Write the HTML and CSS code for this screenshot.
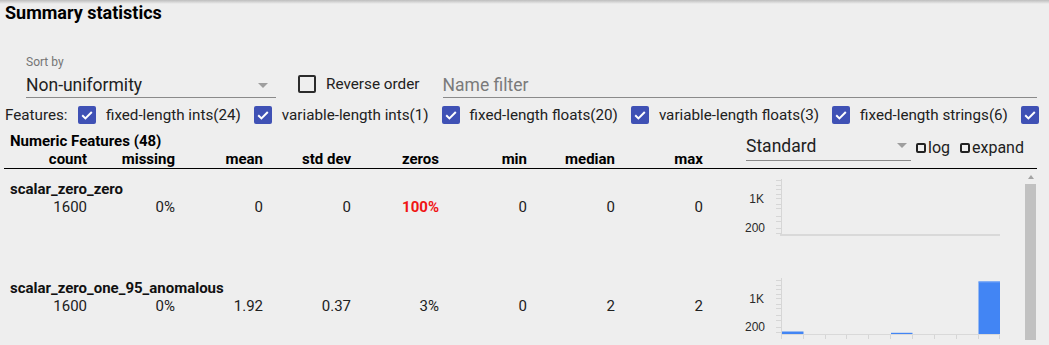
FILE: index.html
```html
<!DOCTYPE html>
<html lang="en">
<head>
    <meta charset="UTF-8">
    <meta name="viewport" content="width=device-width, initial-scale=1.0">
    <title>Summary statistics</title>
    <link rel="stylesheet" href="styles.css">
</head>
<body>
    <h2 class="title">Summary statistics</h2>

    <div class="controls">
        <div class="sort-by">
            <div class="field-label">Sort by</div>
            <div class="select">
                <span>Non-uniformity</span>
                <span class="caret"></span>
            </div>
        </div>
        <label class="reverse">
            <span class="box"></span>
            <span>Reverse order</span>
        </label>
        <div class="name-filter">Name filter</div>
    </div>

    <div class="features">
        <span class="features-label">Features:</span>
        <span class="feature-check">
            <svg class="check" width="18" height="18" viewBox="0 0 18 18"><rect width="18" height="18" rx="2" fill="#3f51b5"/><path d="M4.2 9.3 L7.4 12.4 L13.8 6" fill="none" stroke="#fff" stroke-width="2"/></svg>
            fixed-length ints(24)
        </span>
        <span class="feature-check">
            <svg class="check" width="18" height="18" viewBox="0 0 18 18"><rect width="18" height="18" rx="2" fill="#3f51b5"/><path d="M4.2 9.3 L7.4 12.4 L13.8 6" fill="none" stroke="#fff" stroke-width="2"/></svg>
            variable-length ints(1)
        </span>
        <span class="feature-check">
            <svg class="check" width="18" height="18" viewBox="0 0 18 18"><rect width="18" height="18" rx="2" fill="#3f51b5"/><path d="M4.2 9.3 L7.4 12.4 L13.8 6" fill="none" stroke="#fff" stroke-width="2"/></svg>
            fixed-length floats(20)
        </span>
        <span class="feature-check">
            <svg class="check" width="18" height="18" viewBox="0 0 18 18"><rect width="18" height="18" rx="2" fill="#3f51b5"/><path d="M4.2 9.3 L7.4 12.4 L13.8 6" fill="none" stroke="#fff" stroke-width="2"/></svg>
            variable-length floats(3)
        </span>
        <span class="feature-check">
            <svg class="check" width="18" height="18" viewBox="0 0 18 18"><rect width="18" height="18" rx="2" fill="#3f51b5"/><path d="M4.2 9.3 L7.4 12.4 L13.8 6" fill="none" stroke="#fff" stroke-width="2"/></svg>
            fixed-length strings(6)
        </span>
        <span class="feature-check">
            <svg class="check" width="18" height="18" viewBox="0 0 18 18"><rect width="18" height="18" rx="2" fill="#3f51b5"/><path d="M4.2 9.3 L7.4 12.4 L13.8 6" fill="none" stroke="#fff" stroke-width="2"/></svg>
        </span>
    </div>

    <div class="table-head">
        <div class="head-left">
            <div class="group-title">Numeric Features (48)</div>
            <div class="stat-grid head">
                <span>count</span>
                <span>missing</span>
                <span>mean</span>
                <span>std dev</span>
                <span>zeros</span>
                <span>min</span>
                <span>median</span>
                <span>max</span>
            </div>
        </div>
        <div class="head-right">
            <div class="select small">
                <span>Standard</span>
                <span class="caret"></span>
            </div>
            <span class="mini-check"><span class="mini-box"></span>log</span>
            <span class="mini-check"><span class="mini-box"></span>expand</span>
        </div>
    </div>

    <div class="rows">
        <div class="row-list">
            <!-- fila 1 -->
            <div class="feature-row">
                <div class="feature-stats">
                    <div class="feature-name">scalar_zero_zero</div>
                    <div class="stat-grid">
                        <span>1600</span>
                        <span>0%</span>
                        <span>0</span>
                        <span>0</span>
                        <span class="alert">100%</span>
                        <span>0</span>
                        <span>0</span>
                        <span>0</span>
                    </div>
                </div>
                <svg class="chart" width="262" height="66" viewBox="0 0 262 66">
                    <g stroke="#d6d6d6" stroke-width="1">
                        <line x1="41.5" y1="2" x2="41.5" y2="58"/>
                        <line x1="36" y1="3.5" x2="41" y2="3.5"/>
                        <line x1="36" y1="8.5" x2="41" y2="8.5"/>
                        <line x1="36" y1="12.5" x2="41" y2="12.5"/>
                        <line x1="36" y1="17.5" x2="41" y2="17.5"/>
                        <line x1="36" y1="21.5" x2="41" y2="21.5"/>
                        <line x1="36" y1="27.5" x2="41" y2="27.5"/>
                        <line x1="36" y1="31.5" x2="41" y2="31.5"/>
                        <line x1="36" y1="39.5" x2="41" y2="39.5"/>
                        <line x1="36" y1="44.5" x2="41" y2="44.5"/>
                        <line x1="36" y1="51.5" x2="41" y2="51.5"/>
                        <line x1="36" y1="56.5" x2="41" y2="56.5"/>
                    </g>
                    <rect x="40" y="57" width="220" height="2" fill="#d9d9d9"/>
                    <text class="axis-label" x="24" y="26" text-anchor="end">1K</text>
                    <text class="axis-label" x="25" y="55" text-anchor="end">200</text>
                </svg>
            </div>

            <!-- fila 2 -->
            <div class="feature-row">
                <div class="feature-stats">
                    <div class="feature-name">scalar_zero_one_95_anomalous</div>
                    <div class="stat-grid">
                        <span>1600</span>
                        <span>0%</span>
                        <span>1.92</span>
                        <span>0.37</span>
                        <span>3%</span>
                        <span>0</span>
                        <span>2</span>
                        <span>2</span>
                    </div>
                </div>
                <svg class="chart" width="262" height="66" viewBox="0 0 262 66">
                    <g stroke="#d6d6d6" stroke-width="1">
                        <line x1="41.5" y1="2" x2="41.5" y2="58"/>
                        <line x1="36" y1="4.5" x2="41" y2="4.5"/>
                        <line x1="36" y1="9.5" x2="41" y2="9.5"/>
                        <line x1="36" y1="13.5" x2="41" y2="13.5"/>
                        <line x1="36" y1="18.5" x2="41" y2="18.5"/>
                        <line x1="36" y1="22.5" x2="41" y2="22.5"/>
                        <line x1="36" y1="28.5" x2="41" y2="28.5"/>
                        <line x1="36" y1="32.5" x2="41" y2="32.5"/>
                        <line x1="36" y1="39.5" x2="41" y2="39.5"/>
                        <line x1="36" y1="44.5" x2="41" y2="44.5"/>
                        <line x1="36" y1="51.5" x2="41" y2="51.5"/>
                        <line x1="36" y1="56.5" x2="41" y2="56.5"/>
                        <line x1="41.5" y1="58" x2="41.5" y2="63"/>
                        <line x1="63.5" y1="58" x2="63.5" y2="63"/>
                        <line x1="85.5" y1="58" x2="85.5" y2="63"/>
                        <line x1="106.5" y1="58" x2="106.5" y2="63"/>
                        <line x1="128.5" y1="58" x2="128.5" y2="63"/>
                        <line x1="150.5" y1="58" x2="150.5" y2="63"/>
                        <line x1="172.5" y1="58" x2="172.5" y2="63"/>
                        <line x1="194.5" y1="58" x2="194.5" y2="63"/>
                        <line x1="216.5" y1="58" x2="216.5" y2="63"/>
                        <line x1="238.5" y1="58" x2="238.5" y2="63"/>
                        <line x1="259.5" y1="58" x2="259.5" y2="63"/>
                    </g>
                    <rect x="42" y="55.5" width="21.5" height="2.5" fill="#4285f4"/>
                    <rect x="151" y="56.8" width="21.5" height="1.2" fill="#4285f4"/>
                    <rect x="238.5" y="5.5" width="21.5" height="52.5" fill="#4285f4"/>
                    <line x1="238.5" y1="6" x2="260" y2="6" stroke="#6ea2f7" stroke-width="1"/>
                    <line x1="41" y1="58.5" x2="260" y2="58.5" stroke="#d9d9d9" stroke-width="1"/>
                    <text class="axis-label" x="24" y="27" text-anchor="end">1K</text>
                    <text class="axis-label" x="25" y="54.5" text-anchor="end">200</text>
                </svg>
            </div>
        </div>
        <div class="scrollbar">
            <span class="scroll-arrow"></span>
            <span class="scroll-thumb"></span>
        </div>
    </div>
</body>
</html>
```

FILE: styles.css
```css
html, body {
    height: 100%;
}

body {
    font-family: Roboto, 'Noto Sans', sans-serif;
    margin: 0;
    padding: 2px 0 0;
    background: linear-gradient(to bottom, #bdbdbd, #eeeeee 4px) no-repeat #eeeeee;
    color: #212121;
    overflow: hidden;
    box-sizing: border-box;
}

.title {
    margin: 0;
    padding-left: 5px;
    font-size: 18px;
    font-weight: 700;
    line-height: 21px;
    color: #000;
}

/* controles de orden y filtro */
.controls {
    display: flex;
    align-items: flex-end;
    margin: 32px 12px 0 26px;
}

.sort-by {
    width: 250px;
}

.field-label {
    font-size: 12px;
    line-height: 14px;
    color: #757575;
    margin-bottom: 6px;
}

.select {
    display: flex;
    align-items: center;
    justify-content: space-between;
    font-size: 17.5px;
    line-height: 20px;
    padding: 0 8px 2px 0;
    border-bottom: 1px solid #8a8a8a;
    color: #212121;
}

.caret {
    width: 0;
    height: 0;
    border-left: 5px solid transparent;
    border-right: 5px solid transparent;
    border-top: 5px solid #9e9e9e;
}

.reverse {
    display: flex;
    align-items: center;
    margin: 0 0 5px 22px;
    font-size: 15.3px;
    line-height: 18px;
}

.reverse .box {
    width: 18px;
    height: 18px;
    box-sizing: border-box;
    border: 2px solid #2b2b2b;
    border-radius: 2px;
    margin-right: 10px;
}

.name-filter {
    flex: 1;
    margin-left: 23px;
    font-size: 17.5px;
    line-height: 20px;
    color: #7a7a7a;
    padding-bottom: 2px;
    border-bottom: 1px solid #8a8a8a;
}

/* fila de tipos de features */
.features {
    display: flex;
    align-items: center;
    white-space: nowrap;
    margin-top: 8px;
    padding-left: 5px;
    font-size: 15.2px;
    line-height: 18px;
    height: 18px;
}

.features-label {
    margin-right: 10.5px;
}

.feature-check {
    display: flex;
    align-items: center;
    margin-right: 13px;
}

.check {
    margin-right: 10px;
    flex-shrink: 0;
}

/* cabecera de la tabla */
.table-head {
    display: flex;
    margin: 7.5px 12px 0 4px;
    border-bottom: 1px solid #000;
}

.head-left {
    width: 742px;
}

.group-title {
    padding-left: 6px;
    font-size: 15px;
    font-weight: 700;
    line-height: 18px;
    color: #000;
}

.stat-grid {
    display: grid;
    grid-template-columns: 83px repeat(7, 88px);
    font-size: 15px;
    line-height: 18px;
    text-align: right;
}

.stat-grid.head {
    font-weight: 700;
    color: #000;
}

.head-right {
    display: flex;
    align-items: flex-start;
}

.select.small {
    width: 165px;
    box-sizing: border-box;
    margin-top: 4px;
    padding: 0 4px 4px 0;
}

.mini-check {
    display: flex;
    align-items: center;
    margin-top: 7px;
    font-size: 16px;
    line-height: 18px;
    color: #212121;
}

.mini-check:first-of-type {
    margin-left: 5px;
    margin-right: 10px;
}

.mini-box {
    width: 10px;
    height: 10px;
    box-sizing: border-box;
    border: 2px solid #222;
    border-radius: 2px;
    margin-right: 2px;
}

/* filas de features */
.rows {
    display: flex;
    margin: 0 13px 0 4px;
}

.row-list {
    flex: 1;
    padding-top: 8px;
}

.feature-row {
    display: flex;
    height: 99px;
}

.feature-stats {
    width: 736px;
    padding-top: 3px;
}

.feature-name {
    padding-left: 6px;
    font-size: 15px;
    font-weight: 700;
    line-height: 18px;
    color: #111;
}

.alert {
    color: #f01414;
    font-weight: 700;
}

.chart {
    display: block;
    flex-shrink: 0;
}

.axis-label {
    font-family: 'Liberation Sans', Arial, sans-serif;
    font-size: 12px;
    fill: #2a2a2a;
}

.scrollbar {
    width: 11px;
    display: flex;
    flex-direction: column;
    align-items: center;
    padding-top: 6px;
}

.scroll-arrow {
    width: 0;
    height: 0;
    border-left: 3.5px solid transparent;
    border-right: 3.5px solid transparent;
    border-bottom: 4px solid #a3a3a3;
    margin-bottom: 5px;
}

.scroll-thumb {
    width: 11px;
    height: 156px;
    background: #c1c1c1;
}
```
